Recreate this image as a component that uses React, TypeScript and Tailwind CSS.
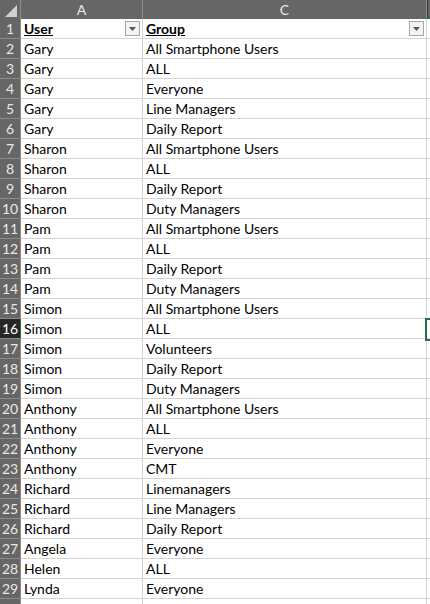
const data: [string, string][] = [
  ["Gary", "All Smartphone Users"],
  ["Gary", "ALL"],
  ["Gary", "Everyone"],
  ["Gary", "Line Managers"],
  ["Gary", "Daily Report"],
  ["Sharon", "All Smartphone Users"],
  ["Sharon", "ALL"],
  ["Sharon", "Daily Report"],
  ["Sharon", "Duty Managers"],
  ["Pam", "All Smartphone Users"],
  ["Pam", "ALL"],
  ["Pam", "Daily Report"],
  ["Pam", "Duty Managers"],
  ["Simon", "All Smartphone Users"],
  ["Simon", "ALL"],
  ["Simon", "Volunteers"],
  ["Simon", "Daily Report"],
  ["Simon", "Duty Managers"],
  ["Anthony", "All Smartphone Users"],
  ["Anthony", "ALL"],
  ["Anthony", "Everyone"],
  ["Anthony", "CMT"],
  ["Richard", "Linemanagers"],
  ["Richard", "Line Managers"],
  ["Richard", "Daily Report"],
  ["Angela", "Everyone"],
  ["Helen", "ALL"],
  ["Lynda", "Everyone"],
];

// row 1 is the header, then data rows, then one empty row cut off at the bottom
const rows: [string, string][] = [["User", "Group"], ...data, ["", ""]];

function FilterButton() {
  return (
    <div className="w-[15px] h-[15px] border border-[#a6a6a6] bg-[#f3f3f3] flex items-center justify-center shrink-0">
      <svg width="7" height="4" viewBox="0 0 7 4">
        <path d="M0 0h7L3.5 4z" fill="#555" />
      </svg>
    </div>
  );
}

export default function App() {
  return (
    <div className="relative w-[430px] h-[604px] overflow-hidden bg-white font-['Lato',sans-serif] text-[14px] text-black">
      {/* ─── Column headers ─── */}
      <div className="flex h-[19px] bg-[#666666] text-[#e8e8e8] text-[14px] leading-[19px]">
        <div className="w-[21px] shrink-0 border-r border-[#8c8c8c] flex items-end justify-end pr-[3px] pb-[2px]">
          <svg width="12" height="12" viewBox="0 0 12 12">
            <path d="M12 0V12H0z" fill="#d0d0d0" />
          </svg>
        </div>
        <div className="w-[122px] shrink-0 border-r border-[#8c8c8c] text-center">A</div>
        <div className="w-[284px] shrink-0 border-r border-[#8c8c8c] text-center">C</div>
        <div className="flex-1 border-l border-[#3a3a3a] border-b-2 border-b-[#217346]" />
      </div>

      {/* ─── Rows ─── */}
      {rows.map(([user, group], i) => {
        const n = i + 1;
        const selected = n === 16;
        const head = n === 1;
        const last = n === rows.length;
        return (
          <div key={n} className="flex h-[20px] leading-[19px]">
            <div
              className={`w-[21px] shrink-0 border-b border-r text-center text-[14px] ${
                selected
                  ? "bg-[#262626] text-white border-b-[#8c8c8c] border-r-[#217346]"
                  : "bg-[#666666] text-[#e8e8e8] border-[#8c8c8c]"
              }`}
            >
              {last ? "" : n}
            </div>
            <div className="w-[122px] shrink-0 border-b border-r border-[#d4d4d4] pl-[3px] pr-[2px] flex items-center justify-between">
              <span className={head ? "font-bold underline" : ""}>{user}</span>
              {head && <FilterButton />}
            </div>
            <div className="w-[284px] shrink-0 border-b border-r border-[#d4d4d4] pl-[3px] pr-[2px] flex items-center justify-between">
              <span className={head ? "font-bold underline" : ""}>{group}</span>
              {head && <FilterButton />}
            </div>
            <div className="flex-1 border-b border-[#d4d4d4]" />
          </div>
        );
      })}

      {/* selected cell D16 */}
      <div className="absolute left-[425px] top-[318px] w-[20px] h-[23px] border-2 border-[#217346]" />
    </div>
  );
}
